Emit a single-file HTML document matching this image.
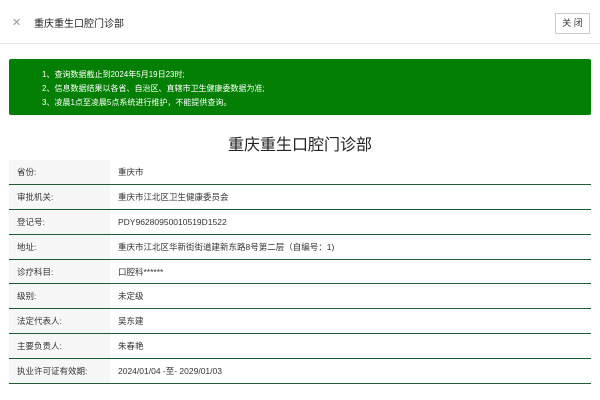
<!DOCTYPE html>
<html><head><meta charset="utf-8"><style>
*{margin:0;padding:0;box-sizing:border-box}
body{width:600px;height:400px;background:#fff;font-family:"Liberation Sans","Noto Sans CJK SC",sans-serif;color:#333;position:relative;overflow:hidden}
.hd{position:absolute;left:0;top:0;width:600px;height:44px;border-bottom:1px solid #e8e8e8}
.x{position:absolute;left:12px;top:16px;font-size:11px;color:#999}
.t{position:absolute;left:34px;top:15px;font-size:10px;color:#222}
.btn{position:absolute;left:555px;top:13px;width:35px;height:21px;border:1px solid #ccc;font-size:9px;text-align:center;line-height:19px;color:#333;background:#fff}
.g{position:absolute;left:9px;top:59px;width:582px;height:56px;background:#038003;border-radius:2px;color:#fff;font-size:8px;padding:9px 0 0 33px;line-height:14px}
.h{position:absolute;left:0;top:131px;width:600px;text-align:center;font-size:16px;color:#222}
table{position:absolute;left:9px;top:160px;width:582px;border-collapse:collapse}
td{height:24.8px;font-size:8.5px;border-bottom:1px solid #1c5e30;color:#333}
td.l{width:101px;background:#f7f7f7;padding-left:8px}
td.v{padding-left:8px}
</style></head><body>
<div class="hd"><span class="x">✕</span><span class="t">重庆重生口腔门诊部</span><div class="btn">关 闭</div></div>
<div class="g">1、查询数据截止到2024年5月19日23时;<br>2、信息数据结果以各省、自治区、直辖市卫生健康委数据为准;<br>3、凌晨1点至凌晨5点系统进行维护，不能提供查询。</div>
<div class="h">重庆重生口腔门诊部</div>
<table>
<tr><td class="l">省份:</td><td class="v">重庆市</td></tr>
<tr><td class="l">审批机关:</td><td class="v">重庆市江北区卫生健康委员会</td></tr>
<tr><td class="l">登记号:</td><td class="v">PDY96280950010519D1522</td></tr>
<tr><td class="l">地址:</td><td class="v">重庆市江北区华新街街道建新东路8号第二层（自编号：1)</td></tr>
<tr><td class="l">诊疗科目:</td><td class="v">口腔科******</td></tr>
<tr><td class="l">级别:</td><td class="v">未定级</td></tr>
<tr><td class="l">法定代表人:</td><td class="v">吴东建</td></tr>
<tr><td class="l">主要负责人:</td><td class="v">朱春艳</td></tr>
<tr><td class="l">执业许可证有效期:</td><td class="v">2024/01/04 -至- 2029/01/03</td></tr>
</table>
</body></html>
